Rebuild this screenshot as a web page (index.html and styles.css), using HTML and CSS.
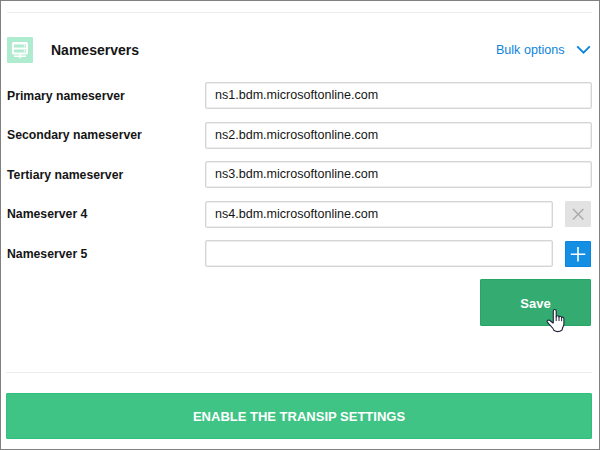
FILE: index.html
```html
<!DOCTYPE html>
<html lang="en">
<head>
<meta charset="utf-8">
<title>Nameservers</title>
<link rel="stylesheet" href="styles.css">
</head>
<body>
<main class="panel">
  <header class="heading">
    <svg class="server-icon" width="26" height="26" viewBox="0 0 26 26">
      <rect width="26" height="26" rx="1.2" fill="#aeebcf"/>
      <rect x="5" y="5" width="16" height="12.6" rx="1.5" fill="#fff"/>
      <path d="M7 7.500h12v3H7zM7 12.500h12v3H7z" fill="#aeebcf"/>
      <path d="M16.800 9h1.400M16.800 14h1.400" stroke="#fff" stroke-width="1.4"/>
      <path d="M13 17v4.200M7 19.300h12" stroke="#fff" stroke-width="1.600"/>
    </svg>
    <h1 class="title">Nameservers</h1>
    <a class="bulk">Bulk options
      <svg class="chevron" width="15" height="10" viewBox="0 0 15 10"><path d="M1.200 1.400l6.300 6.200 6.300-6.200" fill="none" stroke="#0d84dc" stroke-width="1.900"/></svg>
    </a>
  </header>
  <form class="rows">
    <div class="row"><label class="label">Primary nameserver</label><div class="field">ns1.bdm.microsoftonline.com</div></div>
    <div class="row"><label class="label">Secondary nameserver</label><div class="field">ns2.bdm.microsoftonline.com</div></div>
    <div class="row"><label class="label">Tertiary nameserver</label><div class="field">ns3.bdm.microsoftonline.com</div></div>
    <div class="row"><label class="label">Nameserver 4</label><div class="field">ns4.bdm.microsoftonline.com</div>
      <button type="button" class="square remove" aria-label="Remove"><svg width="26" height="26" viewBox="0 0 26 26"><path d="M8 8l10.400 10.400M18.400 8L8 18.400" stroke="#aaa" stroke-width="1.400"/></svg></button></div>
    <div class="row"><label class="label">Nameserver 5</label><div class="field"></div>
      <button type="button" class="square add" aria-label="Add"><svg width="26" height="26" viewBox="0 0 26 26"><path d="M13 6v14.500M5.800 13.200h14.500" stroke="#fff" stroke-width="1.600"/></svg></button></div>
  </form>
  <button type="button" class="save">Save
    <svg class="pointer" width="19" height="25" viewBox="0 0 19 25"><path d="M7.300 15.200V3.300C7.300 .9 10.200 .9 10.200 3.300V9C10.300 7.300 12.900 7.500 13 9.100C13.300 7.700 15.500 8 15.600 9.700C16 8.600 17.900 9 17.900 10.800V16C17.900 18 16.300 19.500 16.100 22C13.500 24 10.300 24 7.800 22.300C7.200 19.400 3.700 17.500 1.300 14.100C.5 12.400 2.800 11.500 4.200 12.700L7.300 15.200" fill="#fff" stroke="#20243a" stroke-width="1.100" stroke-linejoin="round"/><path d="M10.200 8.500v4.500M13 9v4M15.600 9.600v3.600" stroke="#20243a" stroke-width="1"/></svg>
  </button>
  <button type="button" class="enable">ENABLE THE TRANSIP SETTINGS</button>
</main>
</body>
</html>
```
FILE: styles.css
```css
* { box-sizing: border-box; }
body { margin: 0; background: #fff; color: #151515; font: 12px/14px "Liberation Sans", Arial, sans-serif; }
button { border: 0; padding: 0; font: bold 13px/16px "Liberation Sans", Arial, sans-serif; color: #fff; }
svg { display: block; }
.panel { width: 600px; height: 450px; border: 1px solid #808080; padding: 11px 7px 0 5px; display: flex; flex-direction: column; overflow: hidden; }
.heading { border-top: 1px solid #ececec; margin-left: 1px; height: 70px; padding-top: 24px; display: flex; align-items: flex-start; }
.title { margin: 5px 0 0 18px; font-size: 14px; line-height: 16px; }
.bulk { margin: 6px 1px 0 auto; display: flex; align-items: center; gap: 11.5px; color: #0d84dc; font-size: 12.6px; }
.rows { margin-left: 1px; display: flex; flex-direction: column; gap: 12.5px; }
.row { height: 27px; display: flex; align-items: center; }
.label { width: 198px; flex: none; font-size: 12.25px; font-weight: bold; }
.field { flex: 1; height: 27px; border: 1px solid #d5d5d5; box-shadow: inset 0 0 0 .5px #ddd; border-radius: 2px; padding: 5px 0 0 9px; font-size: 12.55px; }
.square { width: 26px; height: 26px; margin: 0 1px 0 12px; border-radius: 1.5px; }
.remove { background: #e2e2e2; }
.add { background: #158fe3; box-shadow: inset 0 0 0 1px #0a86dc; }
.save { position: relative; align-self: flex-end; width: 111px; height: 47px; margin: 12px 1px 0 0; padding-top: 2px; border-radius: 2px; background: #34ab70; box-shadow: inset 0 0 0 1px #25a566; }
.pointer { position: absolute; left: 66px; top: 29px; }
.enable { height: 46px; margin-top: 67px; border-radius: 2px; background: #40c485; box-shadow: inset 0 0 0 1px #31c07b; padding-top: 2px; position: relative; }
.enable::before { content: ""; position: absolute; top: -21px; left: 0; right: 0; height: 1px; background: #ededed; }
```
